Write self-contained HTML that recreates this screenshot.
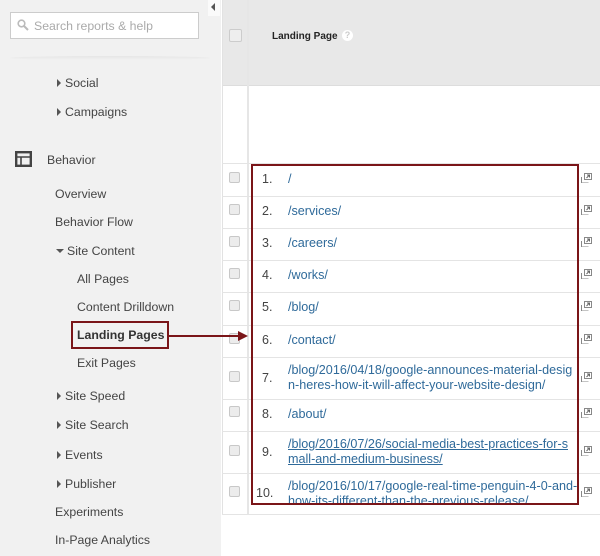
<!DOCTYPE html>
<html><head><meta charset="utf-8"><style>
*{margin:0;padding:0;box-sizing:border-box}
body{width:600px;height:556px;overflow:hidden;background:#fff;font-family:"Liberation Sans",sans-serif;position:relative}
.abs{position:absolute}
#side{left:0;top:0;width:221px;height:556px;background:#f1f1f1}
.nav{position:absolute;font-size:12.3px;color:#444;white-space:nowrap;line-height:14px}
.tri{display:inline-block;width:0;height:0;border-left:4px solid #555;border-top:4px solid transparent;border-bottom:4px solid transparent;margin-right:4px;vertical-align:0}
.trid{display:inline-block;width:0;height:0;border-top:4px solid #555;border-left:4px solid transparent;border-right:4px solid transparent;margin-right:3px;vertical-align:2px}
.cb{position:absolute;left:229px;width:11px;height:11px;border:1px solid #c8c8c8;background:#ececec;border-radius:2px}
.hl{position:absolute;left:222px;width:378px;height:1px;background:#e4e4e4}
.num{position:absolute;left:262px;font-size:12.5px;color:#444;line-height:15px}
.url{position:absolute;left:288px;font-size:12.6px;color:#2f6a9a;line-height:15px;white-space:nowrap}
.ic{position:absolute;left:581px;width:11px;height:10px}
</style></head><body>
<div id="side" class="abs"></div>
<div class="abs" style="left:10px;top:12px;width:189px;height:27px;background:#fff;border:1px solid #ccc"></div>
<svg class="abs" style="left:17px;top:19px" width="12" height="12" viewBox="0 0 12 12"><circle cx="4.5" cy="4.5" r="3.3" fill="none" stroke="#bbb" stroke-width="1.6"/><path d="M7 7l4 4" stroke="#bbb" stroke-width="2"/></svg>
<div class="nav" style="left:34px;top:19px;color:#aaa">Search reports &amp; help</div>
<div class="abs" style="left:10px;top:56px;width:200px;height:4px;background:linear-gradient(#e6e6e6,#f1f1f1);border-radius:50%"></div>
<div class="abs" style="left:208px;top:0;width:12px;height:16px;background:#fafafa"></div>
<div class="abs" style="left:211px;top:3px;width:0;height:0;border-right:4px solid #555;border-top:4px solid transparent;border-bottom:4px solid transparent"></div>

<div class="nav" style="left:57px;top:76px"><span class="tri"></span>Social</div>
<div class="nav" style="left:57px;top:105px"><span class="tri"></span>Campaigns</div>
<svg class="abs" style="left:15px;top:151px" width="17" height="16" viewBox="0 0 17 16"><rect x="1.2" y="1.2" width="14.6" height="13.6" fill="none" stroke="#444" stroke-width="2.4"/><path d="M1 6h15M6 6v9" stroke="#444" stroke-width="1.6"/></svg>
<div class="nav" style="left:47px;top:153px">Behavior</div>
<div class="nav" style="left:55px;top:187px">Overview</div>
<div class="nav" style="left:55px;top:215px">Behavior Flow</div>
<div class="nav" style="left:56px;top:244px"><span class="trid"></span>Site Content</div>
<div class="nav" style="left:77px;top:272px">All Pages</div>
<div class="nav" style="left:77px;top:300px">Content Drilldown</div>
<div class="abs" style="left:71px;top:321px;width:98px;height:28px;border:2px solid #7a1518"></div>
<div class="nav" style="left:77px;top:328px;font-weight:bold;color:#333">Landing Pages</div>
<div class="nav" style="left:77px;top:356px">Exit Pages</div>
<div class="nav" style="left:57px;top:389px"><span class="tri"></span>Site Speed</div>
<div class="nav" style="left:57px;top:418px"><span class="tri"></span>Site Search</div>
<div class="nav" style="left:57px;top:448px"><span class="tri"></span>Events</div>
<div class="nav" style="left:57px;top:477px"><span class="tri"></span>Publisher</div>
<div class="nav" style="left:55px;top:505px">Experiments</div>
<div class="nav" style="left:55px;top:533px">In-Page Analytics</div>

<!-- table -->
<div class="abs" style="left:222px;top:0;width:378px;height:86px;background:#e8e8e8;border-bottom:1px solid #ddd"></div>
<div class="abs" style="left:247px;top:0;width:2px;height:514px;background:#e6e6e6"></div>
<div class="abs" style="left:222px;top:0;width:1px;height:514px;background:#e2e2e2"></div>
<div class="abs" style="left:229px;top:29px;width:13px;height:13px;border:1px solid #ccc;background:#eee;border-radius:2px"></div>
<div class="abs" style="left:272px;top:31px;font-size:10px;font-weight:bold;color:#222">Landing Page</div>
<div class="abs" style="left:342px;top:30px;width:11px;height:11px;border-radius:50%;background:#fff;color:#ccc;font-size:9px;text-align:center;line-height:11px;font-weight:bold">?</div>

<div class="hl" style="top:163px"></div>
<div class="hl" style="top:196px"></div>
<div class="hl" style="top:228px"></div>
<div class="hl" style="top:260px"></div>
<div class="hl" style="top:292px"></div>
<div class="hl" style="top:325px"></div>
<div class="hl" style="top:357px"></div>
<div class="hl" style="top:399px"></div>
<div class="hl" style="top:431px"></div>
<div class="hl" style="top:473px"></div>
<div class="hl" style="top:514px"></div>

<div class="cb" style="top:172px"></div><div class="cb" style="top:204px"></div><div class="cb" style="top:236px"></div><div class="cb" style="top:268px"></div><div class="cb" style="top:300px"></div><div class="cb" style="top:333px"></div><div class="cb" style="top:371px"></div><div class="cb" style="top:406px"></div><div class="cb" style="top:445px"></div><div class="cb" style="top:486px"></div>

<div class="num" style="top:172px">1.</div><div class="url" style="top:172px">/</div>
<div class="num" style="top:204px">2.</div><div class="url" style="top:204px">/services/</div>
<div class="num" style="top:236px">3.</div><div class="url" style="top:236px">/careers/</div>
<div class="num" style="top:268px">4.</div><div class="url" style="top:268px">/works/</div>
<div class="num" style="top:300px">5.</div><div class="url" style="top:300px">/blog/</div>
<div class="num" style="top:333px">6.</div><div class="url" style="top:333px">/contact/</div>
<div class="num" style="top:371px">7.</div><div class="url" style="top:363px">/blog/2016/04/18/google-announces-material-desig<br>n-heres-how-it-will-affect-your-website-design/</div>
<div class="num" style="top:407px">8.</div><div class="url" style="top:407px">/about/</div>
<div class="num" style="top:445px">9.</div><div class="url" style="top:437px;text-decoration:underline">/blog/2016/07/26/social-media-best-practices-for-s<br>mall-and-medium-business/</div>
<div class="num" style="top:486px;left:256px">10.</div>
<div class="abs" style="left:252px;top:474px;width:326px;height:29px;overflow:hidden"><div class="url" style="left:36px;top:5px">/blog/2016/10/17/google-real-time-penguin-4-0-and-<br>how-its-different-than-the-previous-release/</div></div>

<svg width="0" height="0" style="position:absolute"><defs><g id="ico"><rect x="3.5" y="0.5" width="7" height="6" fill="#fff" stroke="#888"/><path d="M0.5 4v6h7" fill="none" stroke="#888"/><path d="M5.5 5l3-3M6 2h2.5v2.5" stroke="#666" fill="none"/></g></defs></svg>
<svg class="ic" style="top:173px"><use href="#ico"/></svg>
<svg class="ic" style="top:205px"><use href="#ico"/></svg>
<svg class="ic" style="top:237px"><use href="#ico"/></svg>
<svg class="ic" style="top:269px"><use href="#ico"/></svg>
<svg class="ic" style="top:301px"><use href="#ico"/></svg>
<svg class="ic" style="top:334px"><use href="#ico"/></svg>
<svg class="ic" style="top:372px"><use href="#ico"/></svg>
<svg class="ic" style="top:408px"><use href="#ico"/></svg>
<svg class="ic" style="top:446px"><use href="#ico"/></svg>
<svg class="ic" style="top:487px"><use href="#ico"/></svg>

<div class="abs" style="left:251px;top:164px;width:328px;height:341px;border:2px solid #7a1518"></div>
<div class="abs" style="left:168px;top:335px;width:72px;height:2px;background:#7a1518"></div>
<div class="abs" style="left:238px;top:331px;width:0;height:0;border-left:10px solid #7a1518;border-top:5px solid transparent;border-bottom:5px solid transparent"></div>
</body></html>
